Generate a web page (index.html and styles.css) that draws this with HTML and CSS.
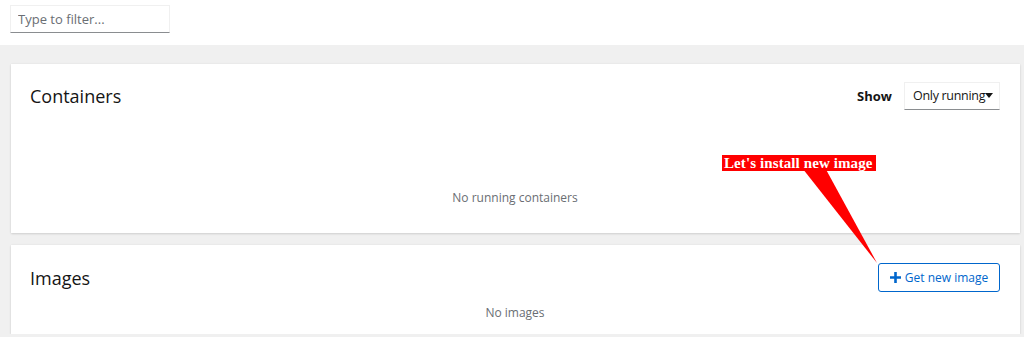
FILE: index.html
```html
<!DOCTYPE html>
<html lang="en">
<head>
  <meta charset="UTF-8">
  <title>Containers</title>
  <link rel="stylesheet" href="styles.css">
</head>
<body>
  <div class="filter-bar">
    <input type="text" class="filter-input" placeholder="Type to filter..." />
  </div>

  <div class="content">
    <section class="card card-containers">
      <div class="card-header">
        <h2>Containers</h2>
        <div class="show-filter">
          <span class="show-label">Show</span>
          <div class="select">Only running<span class="caret"></span></div>
        </div>
      </div>
      <div class="empty empty-containers">No running containers</div>
    </section>

    <section class="card card-images">
      <div class="card-header">
        <h2>Images</h2>
        <button class="btn-secondary">
          <svg width="11" height="11" viewBox="0 0 11 11"><path d="M4.2 0h2.6v4.2H11v2.6H6.8V11H4.2V6.8H0V4.2h4.2z" fill="#0066cc"/></svg>
          Get new image
        </button>
      </div>
      <div class="empty empty-images">No images</div>
    </section>
  </div>

  <!-- annotation overlay -->
  <svg class="note-arrow" width="80" height="100" viewBox="0 0 80 100">
    <polygon points="0,0 24,0 78,99" fill="#ff0000"/>
  </svg>
  <div class="note">Let's install new image</div>
</body>
</html>
```

FILE: styles.css
```css
body {
  margin: 0;
  font-family: "Open Sans", "Liberation Sans", sans-serif;
  color: #151515;
  background: #f0f0f0;
  position: relative;
}
.filter-bar {
  background: #fff;
  height: 45px;
  padding: 5px 10px 0;
  box-sizing: border-box;
}
.filter-input {
  width: 160px;
  height: 28px;
  box-sizing: border-box;
  border: 1px solid #f0f0f0;
  border-bottom-color: #8a8d90;
  padding: 0 7px;
  font-family: inherit;
  font-size: 13px;
  color: #151515;
}
.filter-input::placeholder {
  color: #6a6e73;
}
.content {
  display: flex;
  flex-direction: column;
  gap: 12px;
  padding: 19px 4px 0 11px;
}
.card {
  background: #fff;
  box-shadow: 0 1px 2px rgba(3, 3, 3, 0.12), 0 0 2px rgba(3, 3, 3, 0.06);
  padding: 0 20px 0 19px;
}
.card-containers {
  height: 169px;
  display: flex;
  flex-direction: column;
}
.card-images {
  height: 89px;
}
.card-header {
  display: flex;
  align-items: center;
  justify-content: space-between;
  padding-top: 18px;
}
h2 {
  margin: 0;
  font-weight: 400;
  font-size: 18px;
}
.show-filter {
  display: flex;
  align-items: center;
  gap: 12px;
}
.show-label {
  font-weight: 700;
  font-size: 13px;
}
.select {
  height: 28px;
  width: 96px;
  box-sizing: border-box;
  border: 1px solid #f0f0f0;
  border-bottom-color: #8a8d90;
  padding: 0 0 0 8px;
  font-size: 12.5px;
  line-height: 26px;
  white-space: nowrap;
  letter-spacing: -0.3px;
  color: #151515;
}
.caret {
  display: inline-block;
  width: 0;
  height: 0;
  border-left: 4px solid transparent;
  border-right: 4px solid transparent;
  border-top: 5px solid #151515;
  vertical-align: 2px;
}
.empty {
  text-align: center;
  color: #6a6e73;
  font-size: 12px;
}
.empty-containers {
  margin-top: auto;
  padding-bottom: 27px;
}
.empty-images {
  margin-top: 12px;
}
.btn-secondary {
  height: 29px;
  width: 122px;
  border: 1px solid #0066cc;
  border-radius: 3px;
  background: #fff;
  color: #0066cc;
  font-family: inherit;
  font-size: 12px;
  display: flex;
  align-items: center;
  justify-content: center;
  gap: 4px;
  padding: 0;
}
.note {
  position: absolute;
  left: 722px;
  top: 155px;
  background: #ff0000;
  color: #fff;
  font-family: "Liberation Serif", serif;
  font-weight: 700;
  font-size: 15px;
  line-height: 16px;
  padding: 0 3px 0 2px;
  letter-spacing: 0.1px;
}
.note-arrow {
  position: absolute;
  left: 799px;
  top: 164px;
}
```
